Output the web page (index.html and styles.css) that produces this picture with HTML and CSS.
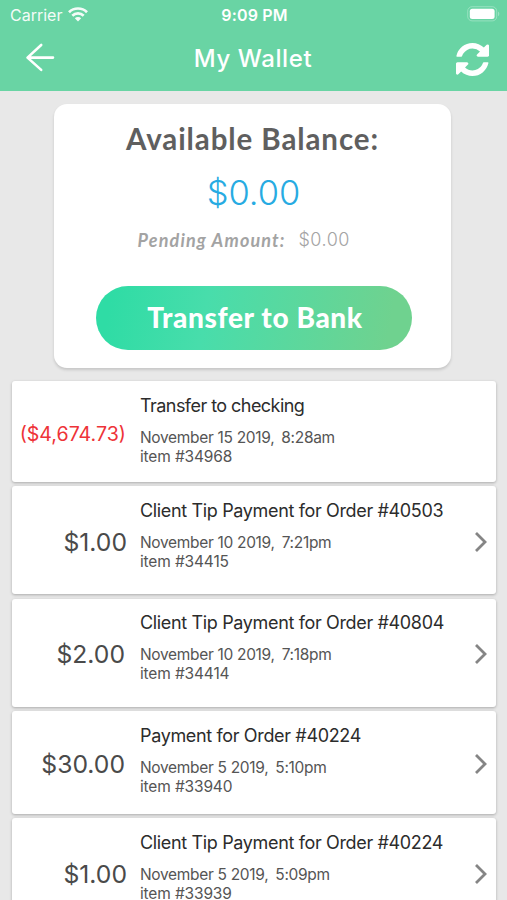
FILE: index.html
```html
<!DOCTYPE html>
<html lang="en">
<head>
<meta charset="utf-8">
<title>My Wallet</title>
<link rel="stylesheet" href="styles.css">
</head>
<body>
<header class="header">
  <div class="status">
    <div class="carrier"><span>Carrier</span>
      <svg class="wifi" width="20" height="15" viewBox="0 0 20 15"><g fill="none" stroke="#fff" stroke-width="2.7"><path d="M1 5.2a12.8 12.8 0 0 1 18 0"/><path d="M4.3 8.7a8.2 8.2 0 0 1 11.4 0"/></g><path fill="#fff" d="M6.8 11.3a4.6 4.6 0 0 1 6.4 0L10 14.6z"/></svg>
    </div>
    <time class="clock">9:09 PM</time>
    <svg class="battery" width="33" height="16" viewBox="0 0 33 16"><rect x=".7" y=".7" width="29" height="14.2" rx="4.4" fill="none" stroke="#fff" stroke-opacity=".3"/><rect x="2.8" y="2.8" width="24.8" height="10.2" rx="2.5" fill="#fff"/><path d="M31.2 5.5c1.5.7 1.5 4 0 4.7z" fill="#fff" fill-opacity=".4"/></svg>
  </div>
  <nav class="nav">
    <svg class="back" width="30" height="30" viewBox="0 0 30 30"><path d="M16.2 2 2.5 14.6l13.7 12.3M2.8 14.6h25.2" fill="none" stroke="#fff" stroke-width="2.6" stroke-linecap="round" stroke-linejoin="round"/></svg>
    <h1 class="title">My Wallet</h1>
    <svg class="refresh" width="33" height="33" viewBox="0 0 1536 1536"><path fill="#fff" d="M1511 928q0 5-1 7-64 268-268 434.500T764 1536q-146 0-282.500-55T238 1324l-129 129q-19 19-45 19t-45-19-19-45V960q0-26 19-45t45-19h448q26 0 45 19t19 45-19 45l-137 137q71 66 161 102t187 36q134 0 250-65t186-179q11-17 53-117 8-23 30-23h192q13 0 22.500 9.500t9.500 22.500zM1536 128v448q0 26-19 45t-45 19h-448q-26 0-45-19t-19-45 19-45l138-138Q969 256 768 256q-134 0-250 65T332 500q-11 17-53 117-8 23-30 23H50q-13 0-22.500-9.500T18 608v-7q65-268 270-434.500T768 0q146 0 284 55.500T1297 212l130-129q19-19 45-19t45 19 19 45z"/></svg>
  </nav>
</header>
<main class="main">
  <section class="balance">
    <h2 class="balance-title">Available Balance:</h2>
    <div class="balance-value">$0.00</div>
    <div class="pending"><span class="pending-label">Pending Amount:</span><span class="pending-value">$0.00</span></div>
    <button class="transfer">Transfer to Bank</button>
  </section>
  <ul class="list">
    <li class="row row-short">
      <div class="amount negative">($4,674.73)</div>
      <div class="info"><h3>Transfer to checking</h3><p>November 15 2019, <span>8:28am</span></p><p class="item">item #34968</p></div>
    </li>
    <li class="row">
      <div class="amount">$1.00</div>
      <div class="info"><h3>Client Tip Payment for Order #40503</h3><p>November 10 2019, <span>7:21pm</span></p><p class="item">item #34415</p></div>
      <svg class="chevron" width="14" height="22" viewBox="0 0 14 22"><path d="M2 2l9 9-9 9"/></svg>
    </li>
    <li class="row">
      <div class="amount inset">$2.00</div>
      <div class="info"><h3>Client Tip Payment for Order #40804</h3><p>November 10 2019, <span>7:18pm</span></p><p class="item">item #34414</p></div>
      <svg class="chevron" width="14" height="22" viewBox="0 0 14 22"><path d="M2 2l9 9-9 9"/></svg>
    </li>
    <li class="row row-medium">
      <div class="amount inset">$30.00</div>
      <div class="info"><h3>Payment for Order #40224</h3><p>November 5 2019, <span>5:10pm</span></p><p class="item">item #33940</p></div>
      <svg class="chevron" width="14" height="22" viewBox="0 0 14 22"><path d="M2 2l9 9-9 9"/></svg>
    </li>
    <li class="row">
      <div class="amount">$1.00</div>
      <div class="info"><h3>Client Tip Payment for Order #40224</h3><p>November 5 2019, <span>5:09pm</span></p><p class="item">item #33939</p></div>
      <svg class="chevron" width="14" height="22" viewBox="0 0 14 22"><path d="M2 2l9 9-9 9"/></svg>
    </li>
  </ul>
</main>
</body>
</html>
```

FILE: styles.css
```css
* { box-sizing: border-box; margin: 0; padding: 0; }
body {
  height: 900px;
  overflow: hidden;
  background: #e8e8e8;
  font-family: Inter, "Liberation Sans", sans-serif;
  color: #4a4a4a;
}
.header { height: 91px; background: #69d4a4; color: #fff; }
.status {
  height: 30px;
  padding: 0 7px 0 10px;
  display: grid;
  grid-template-columns: 1fr auto 1fr;
  align-items: center;
}
.carrier { display: flex; align-items: center; gap: 6px; font-size: 16px; opacity: .93; }
.wifi { margin-top: -1px; }
.clock { font-size: 16px; font-weight: 600; letter-spacing: .15px; padding-right: 1px; }
.battery { justify-self: end; margin-top: -2px; }
.nav {
  height: 57px;
  padding: 0 18px 0 25px;
  display: grid;
  grid-template-columns: 1fr auto 1fr;
  align-items: center;
}
.back { margin-top: -1px; }
.title { font-size: 24px; font-weight: 500; letter-spacing: .6px; padding-right: 8px; }
.refresh { justify-self: end; margin-top: 2px; }
.main { padding: 13px 11px 0 12px; }
.balance {
  width: 397px;
  height: 264px;
  margin: 0 auto 13px 42px;
  display: flex;
  flex-direction: column;
  align-items: center;
  background: #fff;
  border-radius: 13px;
  box-shadow: 0 2px 3px rgba(0, 0, 0, .15);
  font-family: "Century Gothic", Lato, sans-serif;
}
.balance-title { margin-top: 18px; font-size: 29.5px; line-height: 34px; font-weight: 700; color: #5f5f5f; letter-spacing: .9px; }
.balance-value { margin-top: 16px; padding-left: 2px; font-family: Inter, sans-serif; font-size: 34.5px; line-height: 42px; font-weight: 350; color: #27abe2; }
.pending { margin-top: 14px; width: 230px; display: flex; align-items: center; line-height: 24px; font-size: 18px; }
.pending-label { width: 161px; flex: none; font-style: italic; font-weight: 700; color: #a3a3a3; letter-spacing: 1.15px; white-space: nowrap; }
.pending-value { font-family: Inter, sans-serif; font-weight: 300; letter-spacing: .5px; color: #a4a4a4; }
.transfer {
  width: 316px;
  height: 64px;
  margin-top: 34px;
  margin-left: 2px;
  padding: 0 0 3px 3px;
  border: 0;
  border-radius: 32px;
  background: linear-gradient(100deg, #2fdca5 5%, #48ddab 35%, #6fd28f 92%);
  color: #fff;
  font: 900 28px Lato, sans-serif;
  letter-spacing: .6px;
}
.list { list-style: none; display: flex; flex-direction: column; gap: 4.5px; }
.row {
  height: 108px;
  flex: none;
  display: grid;
  grid-template-columns: 115px 1fr 14px;
  column-gap: 13px;
  padding-right: 8px;
  background: #fff;
  border-radius: 3px;
  box-shadow: 0 1px 3px rgba(0, 0, 0, .27);
}
.row-short { height: 100.5px; }
.row-medium { height: 102.5px; }
.amount { align-self: center; text-align: right; font-size: 24.7px; line-height: 30px; padding-top: 3.2px; }
.inset { padding-right: 2px; }
.negative { font-size: 19.6px; color: #ee3338; padding: 5px 1px 0 0; white-space: nowrap; }
.info { padding-top: 12.6px; white-space: nowrap; }
.info h3 { font-size: 18px; line-height: 24px; font-weight: 400; color: #2c2c2c; margin-bottom: 10px; letter-spacing: -.35px; }
.row-short h3 { letter-spacing: -.55px; }
.info p { font-size: 15.5px; line-height: 19px; color: #555; letter-spacing: -.32px; }
.info .item { letter-spacing: -.15px; }
.info p span { margin-left: 3px; }
.chevron { align-self: center; margin-top: 3.2px; fill: none; stroke: #858585; stroke-width: 2.8; }
```
